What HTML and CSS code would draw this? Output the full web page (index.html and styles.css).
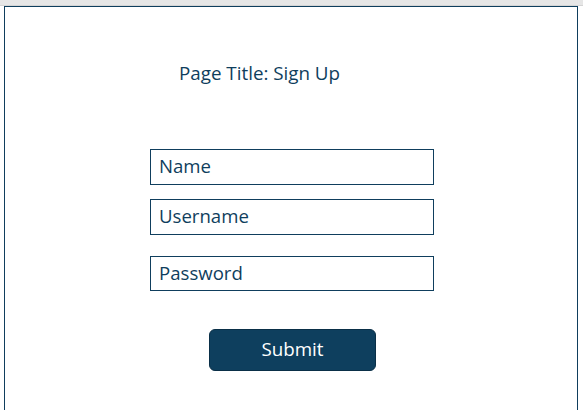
FILE: index.html
```html
<!DOCTYPE html>
<html>
<head>
<meta charset="utf-8">
<link rel="stylesheet" href="styles.css">
</head>
<body>
<div class="topbar"></div>
<div class="frame">
  <h1 class="title">Page Title: Sign Up</h1>
  <form class="form">
    <div class="field">Name</div>
    <div class="field">Username</div>
    <div class="field field-gap">Password</div>
    <button type="button" class="submit">Submit</button>
  </form>
</div>
</body>
</html>
```
FILE: styles.css
```css
html, body {
  margin: 0;
  padding: 0;
  background: #ffffff;
  font-family: "Open Sans", "Noto Sans", sans-serif;
  color: #0f3e5d;
  overflow: hidden;
}
.topbar {
  height: 5px;
  background: #e6e6e6;
  border-bottom: 1px solid #d4d4d4;
}
.frame {
  margin-left: 4px;
  width: 574px;
  height: 420px;
  border: 1px solid #0f3e5d;
  border-bottom: none;
  box-sizing: border-box;
  padding-top: 51px;
}
.title {
  margin: 0 0 0 174px;
  font-size: 18.8px;
  font-weight: 400;
  line-height: 30px;
}
.form {
  margin: 61px 0 0 145px;
  display: flex;
  flex-direction: column;
  align-items: flex-start;
}
.field {
  width: 284px;
  height: 36px;
  box-sizing: border-box;
  border: 1px solid #0f3e5d;
  padding-left: 8px;
  font-size: 18.6px;
  line-height: 32px;
  margin-bottom: 14px;
}
.field-gap {
  margin-top: 7px;
  height: 35px;
}
.submit {
  margin: 24px 0 0 59px;
  width: 167px;
  height: 42px;
  border: 1px solid #0a2f47;
  border-radius: 6px;
  background: #0e3f5e;
  color: #ffffff;
  font-family: "Open Sans", "Noto Sans", sans-serif;
  font-size: 18.8px;
  line-height: 36px;
  padding: 0 0 2px;
}
```
